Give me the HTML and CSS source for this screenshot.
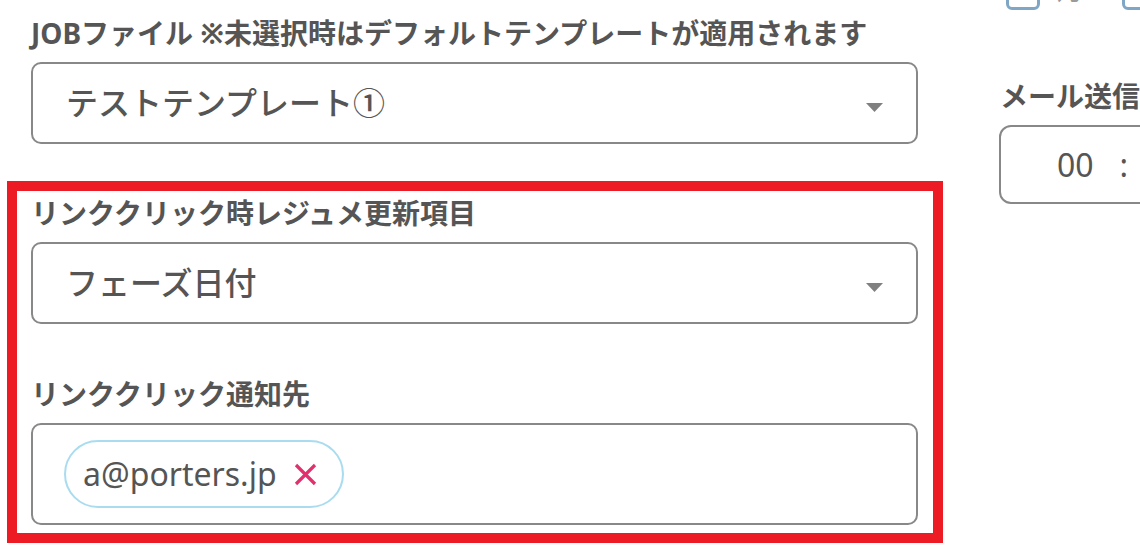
FILE: index.html
```html
<!DOCTYPE html>
<html lang="ja">
<head>
<meta charset="utf-8">
<title>Form</title>
<link rel="stylesheet" href="styles.css">
</head>
<body>
<div class="page">
  <div class="left">
    <div class="field plain">
      <div class="label">JOBファイル ※未選択時はデフォルトテンプレートが適用されます</div>
      <div class="select">
        <span class="value">テストテンプレート①</span>
        <svg class="caret" width="17" height="9" viewBox="0 0 17 9"><polygon points="0,0 17,0 8.5,9" fill="#808080"/></svg>
      </div>
    </div>
    <div class="highlight">
      <div class="field">
        <div class="label">リンククリック時レジュメ更新項目</div>
        <div class="select">
          <span class="value">フェーズ日付</span>
          <svg class="caret" width="17" height="9" viewBox="0 0 17 9"><polygon points="0,0 17,0 8.5,9" fill="#808080"/></svg>
        </div>
      </div>
      <div class="field">
        <div class="label">リンククリック通知先</div>
        <div class="tags">
          <span class="chip">
            <span class="chip-text">a@porters.jp</span>
            <svg class="chip-x" width="23" height="23" viewBox="0 0 23 23"><path d="M2 2 L21 21 M21 2 L2 21" stroke="#e0306e" stroke-width="3.2" fill="none"/></svg>
          </span>
        </div>
      </div>
    </div>
  </div>
  <div class="right">
    <div class="date-row">
      <span class="date-box"></span>
      <span class="date-unit">月</span>
      <span class="date-box"></span>
    </div>
    <div class="label">メール送信日時</div>
    <div class="time">
      <span class="time-num">00</span>
      <span class="time-sep">:</span>
      <span class="time-num">00</span>
    </div>
  </div>
</div>
</body>
</html>
```

FILE: styles.css
```css
html, body {
  margin: 0;
  padding: 0;
  background: #ffffff;
  overflow: hidden;
}

body {
  font-family: "Noto Sans", "Noto Sans CJK JP", sans-serif;
  color: #555555;
}

.page {
  display: flex;
  align-items: flex-start;
  gap: 56px;
  padding: 13px 0 0 7px;
  width: 1300px;
}

.left {
  width: 936px;
  flex: none;
}

.field.plain {
  padding: 0 25px 0 24px;
}

.label {
  font-size: 28px;
  font-weight: 700;
  line-height: 40px;
  margin-bottom: 9px;
  white-space: nowrap;
  color: #555555;
}

.select {
  display: flex;
  align-items: center;
  height: 78px;
  border: 2px solid #888888;
  border-radius: 10px;
  padding: 0 33px 0 33px;
}

.value {
  font-size: 32px;
  font-weight: 500;
  line-height: 40px;
  color: #555555;
}

.caret {
  margin-left: auto;
  margin-top: 8px;
  flex: none;
}

.highlight {
  margin-top: 37px;
  border: 10px solid #ed1c24;
  padding: 2px 15px 8px 14px;
}

.highlight .field + .field {
  margin-top: 50px;
}

.tags {
  display: flex;
  align-items: center;
  border: 2px solid #888888;
  border-radius: 10px;
  padding: 15px 31px;
}

.chip {
  display: inline-flex;
  align-items: center;
  height: 64px;
  border: 2px solid #aadcf0;
  border-radius: 34px;
  padding: 0 25px 0 17px;
}

.chip-text {
  font-size: 32px;
  font-weight: 400;
  line-height: 40px;
  color: #555555;
}

.chip-x {
  margin-left: 17px;
  flex: none;
}

.right {
  flex: none;
  width: 400px;
}

.date-row {
  display: flex;
  align-items: center;
  margin-top: -43px;
  height: 40px;
}

.date-box {
  width: 28px;
  height: 34px;
  border: 3px solid #7fa6c4;
  border-radius: 6px;
  margin-left: 7px;
}

.date-unit {
  font-size: 26px;
  line-height: 40px;
  color: #9a9a9a;
  margin-left: 17px;
  margin-right: 39px;
}

.date-row .date-box + .date-unit + .date-box {
  margin-left: 0;
}

.right .label {
  margin-top: 66px;
  margin-left: 1px;
}

.time {
  display: flex;
  align-items: center;
  height: 75px;
  border: 2px solid #888888;
  border-radius: 12px;
  padding-left: 56px;
  width: 300px;
}

.time-num {
  font-size: 32px;
  font-weight: 400;
  line-height: 40px;
  color: #555555;
}

.time-sep {
  font-size: 32px;
  font-weight: 400;
  line-height: 40px;
  color: #555555;
  margin: 0 26px;
}
```
